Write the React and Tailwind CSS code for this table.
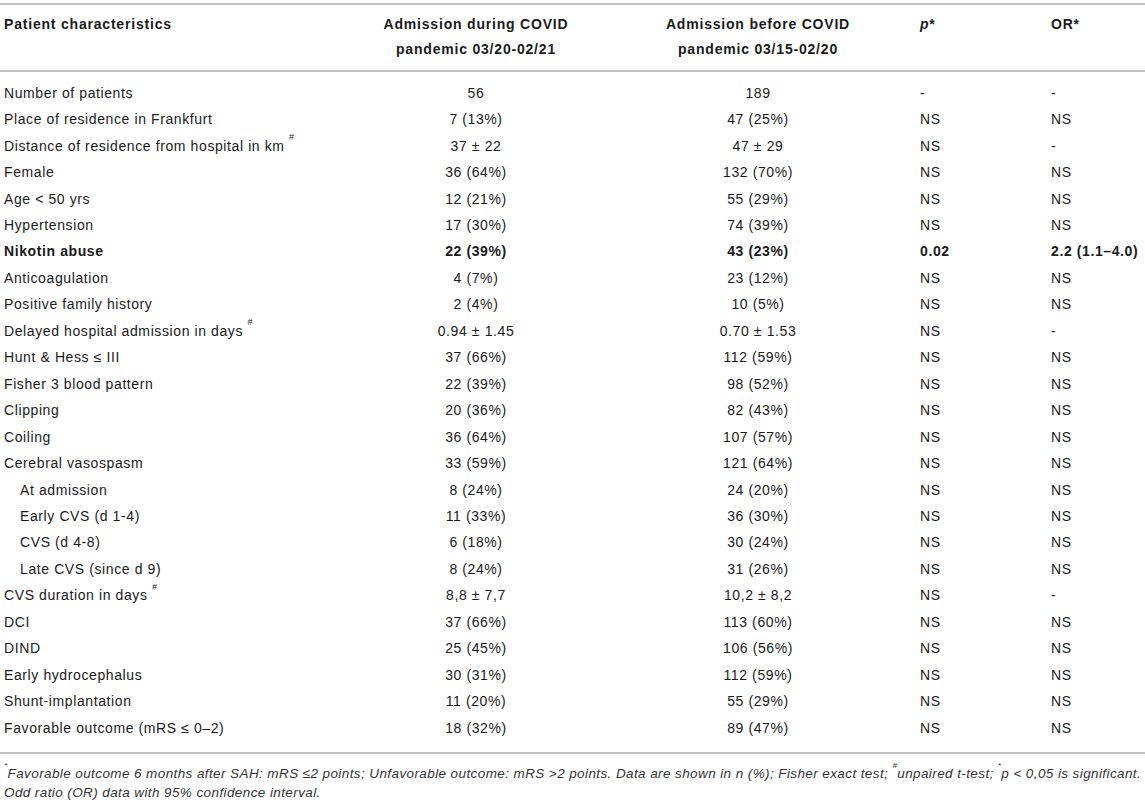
import React from "react";

const rows = [
  ["Number of patients", "56", "189", "-", "-"],
  ["Place of residence in Frankfurt", "7 (13%)", "47 (25%)", "NS", "NS"],
  [["Distance of residence from hospital in km", "#"], "37 ± 22", "47 ± 29", "NS", "-"],
  ["Female", "36 (64%)", "132 (70%)", "NS", "NS"],
  ["Age < 50 yrs", "12 (21%)", "55 (29%)", "NS", "NS"],
  ["Hypertension", "17 (30%)", "74 (39%)", "NS", "NS"],
  ["Nikotin abuse", "22 (39%)", "43 (23%)", "0.02", "2.2 (1.1–4.0)", "bold"],
  ["Anticoagulation", "4 (7%)", "23 (12%)", "NS", "NS"],
  ["Positive family history", "2 (4%)", "10 (5%)", "NS", "NS"],
  [["Delayed hospital admission in days", "#"], "0.94 ± 1.45", "0.70 ± 1.53", "NS", "-"],
  ["Hunt & Hess ≤ III", "37 (66%)", "112 (59%)", "NS", "NS"],
  ["Fisher 3 blood pattern", "22 (39%)", "98 (52%)", "NS", "NS"],
  ["Clipping", "20 (36%)", "82 (43%)", "NS", "NS"],
  ["Coiling", "36 (64%)", "107 (57%)", "NS", "NS"],
  ["Cerebral vasospasm", "33 (59%)", "121 (64%)", "NS", "NS"],
  ["At admission", "8 (24%)", "24 (20%)", "NS", "NS", "indent"],
  ["Early CVS (d 1-4)", "11 (33%)", "36 (30%)", "NS", "NS", "indent"],
  ["CVS (d 4-8)", "6 (18%)", "30 (24%)", "NS", "NS", "indent"],
  ["Late CVS (since d 9)", "8 (24%)", "31 (26%)", "NS", "NS", "indent"],
  [["CVS duration in days", "#"], "8,8 ± 7,7", "10,2 ± 8,2", "NS", "-"],
  ["DCI", "37 (66%)", "113 (60%)", "NS", "NS"],
  ["DIND", "25 (45%)", "106 (56%)", "NS", "NS"],
  ["Early hydrocephalus", "30 (31%)", "112 (59%)", "NS", "NS"],
  ["Shunt-implantation", "11 (20%)", "55 (29%)", "NS", "NS"],
  ["Favorable outcome (mRS ≤ 0–2)", "18 (32%)", "89 (47%)", "NS", "NS"],
];

const grid = "grid grid-cols-[372px_208px_340px_131px_1fr]";

export default function App() {
  return (
    <div
      className="w-[1145px] h-[800px] bg-white text-[#1a1a1a] overflow-hidden pt-[3px]"
      style={{ fontFamily: '"Liberation Sans", Arial, sans-serif' }}
    >
      <div className="h-[2px] bg-[#c2c2c2]" />
      <div className={`${grid} text-[14px] tracking-[0.8px] leading-[25px] font-bold pt-[7px] pb-[8px]`}>
        <div className="pl-[4px]">Patient characteristics</div>
        <div className="text-center">
          Admission during COVID
          <br />
          pandemic 03/20-02/21
        </div>
        <div className="text-center pl-[16px]">
          Admission before COVID
          <br />
          pandemic 03/15-02/20
        </div>
        <div>
          <span className="italic">p</span>*
        </div>
        <div>OR*</div>
      </div>
      <div className="h-[2px] bg-[#c2c2c2]" />
      <div className="pt-[8px] pb-[11px] text-[14px] tracking-[0.6px]">
        {rows.map((r, i) => {
          const bold = r[5] === "bold";
          const indent = r[5] === "indent";
          return (
            <div
              key={i}
              className={`${grid} h-[26.46px] items-center ${bold ? "font-bold" : ""}`}
            >
              <div className={indent ? "pl-[20px]" : "pl-[4px]"}>
                {Array.isArray(r[0]) ? (
                  <>
                    {r[0][0]} <sup className="text-[9px] align-[6px]">{r[0][1]}</sup>
                  </>
                ) : (
                  r[0]
                )}
              </div>
              <div className="text-center">{r[1]}</div>
              <div className="text-center pl-[16px]">{r[2]}</div>
              <div>{r[3]}</div>
              <div>{r[4]}</div>
            </div>
          );
        })}
      </div>
      <div className="h-[2px] bg-[#c2c2c2]" />
      <div className="pt-[10px] pl-[4px] text-[13.5px] tracking-[0.4px] leading-[19px] italic text-[#333]">
        <div>
          <sup className="text-[8px] align-[6px]">*</sup>Favorable outcome 6 months after SAH: mRS ≤2 points;
          Unfavorable outcome: mRS &gt;2 points. Data are shown in n (%); Fisher exact test;{" "}
          <sup className="text-[8px] align-[6px]">#</sup>unpaired t-test;{" "}
          <sup className="text-[8px] align-[6px]">*</sup>p &lt; 0,05 is significant.
        </div>
        <div>Odd ratio (OR) data with 95% confidence interval.</div>
      </div>
    </div>
  );
}
